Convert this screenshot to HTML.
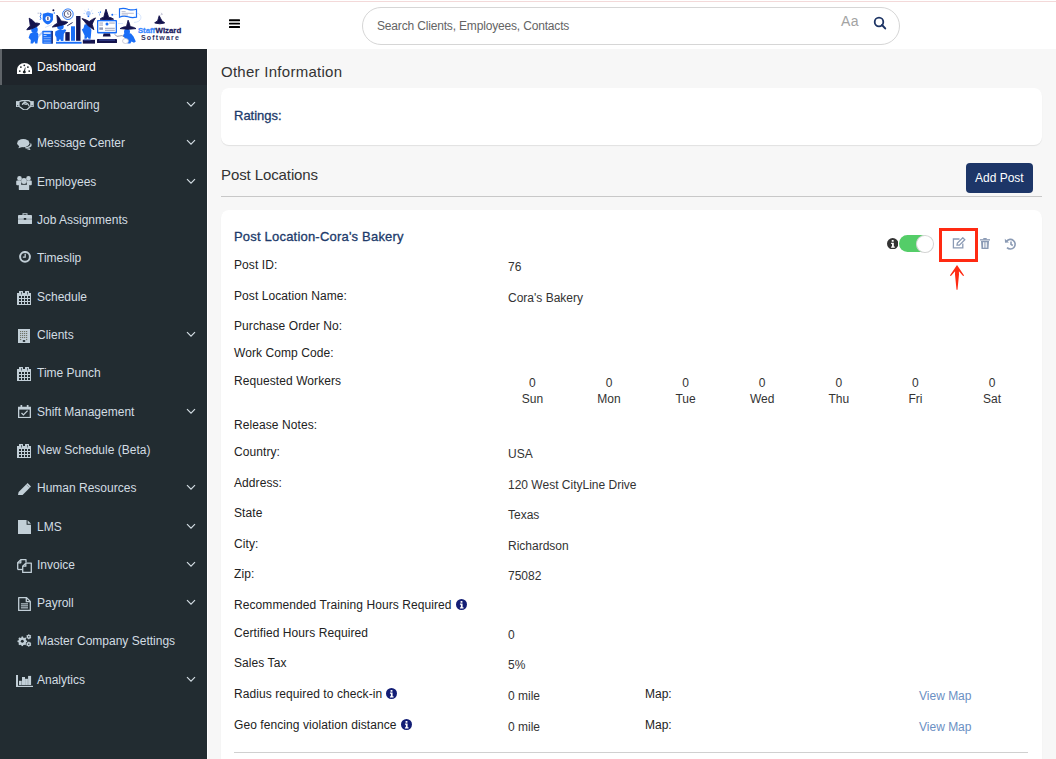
<!DOCTYPE html>
<html><head><meta charset="utf-8">
<style>
*{box-sizing:border-box;margin:0;padding:0}
html,body{width:1056px;height:759px;overflow:hidden;background:#f7f7f7;font-family:"Liberation Sans",sans-serif;font-size:12px;color:#212529}
.t{position:absolute;white-space:nowrap}
.ic{position:absolute;display:block}
.bx{position:absolute}
#topline{position:absolute;left:0;top:1px;width:1056px;height:1px;background:#f3d9d9}
#header{position:absolute;left:0;top:0;width:1056px;height:49px;background:#fff}
#sidebar{position:absolute;left:0;top:49px;width:207px;height:710px;background:#222c31}
.activebg{position:absolute;left:0;top:49px;width:207px;height:36px;background:#1f252b;border-left:2px solid #5f6469}
#gap{position:absolute;left:207px;top:49px;width:1px;height:710px;background:#fff}
.card{position:absolute;background:#fff;border-radius:8px;box-shadow:0 1px 1px rgba(0,0,0,0.09)}
</style></head><body>
<div id="header"></div><div id="topline"></div><div id="gap"></div>
<div id="sidebar"></div><div class="activebg"></div>
<svg class="ic" style="left:16.9px;top:62.6px" width="15" height="11.6" viewBox="0 0 15 11.6"><path d="M0 11.6V6.6A7.5 6.6 0 0 1 15 6.6V11.6Z" fill="#fff"/>
<g fill="#1d2428"><circle cx="2.8" cy="8.1" r="0.9"/><circle cx="3.9" cy="4.1" r="0.9"/><circle cx="7.3" cy="2.3" r="0.9"/><circle cx="10.9" cy="4.1" r="0.9"/><circle cx="12.2" cy="8.1" r="0.9"/><circle cx="7.3" cy="8.9" r="1.5"/><path d="M6.7 8.6L8 4.4L8.6 4.6L7.9 9Z"/></g></svg>
<div class="t" style="left:37px;top:61px;font-size:12px;line-height:12px;color:#ffffff;font-weight:normal;">Dashboard</div>
<svg class="ic" style="left:16px;top:99.7px" width="17.8" height="10.6" viewBox="0 0 17.8 10.6"><g fill="none" stroke="#c2cfd7" stroke-width="1.25" stroke-linejoin="round" stroke-linecap="round">
<path d="M3.6 1.3Q5.5 0.6 7 0.6H12.8L14.4 1.6"/><path d="M3.6 6.8L8 9.9H10.6L14.4 6.6"/><path d="M6.4 4.3L8.7 1.8L11.8 3.9L13.1 6"/><path d="M7.6 3.6L10.4 4.3"/></g>
<rect x="0" y="1.1" width="3.6" height="5.9" fill="#c2cfd7"/><rect x="14.2" y="1.1" width="3.6" height="5.9" fill="#c2cfd7"/><rect x="1.2" y="5.2" width="1" height="1" fill="#222b30"/><rect x="15.6" y="5.2" width="1" height="1" fill="#222b30"/></svg>
<div class="t" style="left:37px;top:99px;font-size:12px;line-height:12px;color:#d3dde3;font-weight:normal;">Onboarding</div>
<svg class="ic" style="left:185.5px;top:101.0px" width="10" height="7" viewBox="0 0 10 7"><path d="M1 1.2L5 5.2L9 1.2" fill="none" stroke="#d3dde3" stroke-width="1.2"/></svg>
<svg class="ic" style="left:16.9px;top:138.6px" width="15" height="11.4" viewBox="0 0 15 11.4"><path d="M8 9.2Q12.5 9.5 14.2 7.5Q15.3 5.6 13.6 3.8Q14 7.7 8 8.4Z" fill="#c2cfd7"/><path d="M13.6 11.2L12.6 9.2L8.5 9.4Q11.5 10.5 13.6 11.2Z" fill="#c2cfd7"/>
<ellipse cx="6.3" cy="4.2" rx="6.1" ry="4.1" fill="#c2cfd7"/><path d="M1.3 9.3L2.6 6.6L5.2 7.9Z" fill="#c2cfd7"/></svg>
<div class="t" style="left:37px;top:137px;font-size:12px;line-height:12px;color:#d3dde3;font-weight:normal;">Message Center</div>
<svg class="ic" style="left:185.5px;top:139.0px" width="10" height="7" viewBox="0 0 10 7"><path d="M1 1.2L5 5.2L9 1.2" fill="none" stroke="#d3dde3" stroke-width="1.2"/></svg>
<svg class="ic" style="left:16.1px;top:175.7px" width="16" height="14.3" viewBox="0 0 16 14.3"><g fill="#c2cfd7"><circle cx="3.5" cy="2.4" r="2.3"/><circle cx="12.5" cy="2.4" r="2.3"/><rect x="0.2" y="4.6" width="5" height="4.6" rx="1"/><rect x="10.8" y="4.6" width="5" height="4.6" rx="1"/>
<circle cx="8" cy="5" r="2.9"/><rect x="2.8" y="8.8" width="10.4" height="5.5" rx="1"/></g></svg>
<div class="t" style="left:37px;top:176px;font-size:12px;line-height:12px;color:#d3dde3;font-weight:normal;">Employees</div>
<svg class="ic" style="left:185.5px;top:178.0px" width="10" height="7" viewBox="0 0 10 7"><path d="M1 1.2L5 5.2L9 1.2" fill="none" stroke="#d3dde3" stroke-width="1.2"/></svg>
<svg class="ic" style="left:17.9px;top:212.7px" width="14" height="11.3" viewBox="0 0 14 11.3"><g fill="#c2cfd7"><path d="M4.5 0.2H9.5V2H8.5V1.2H5.5V2H4.5Z"/><rect x="0" y="2" width="14" height="9.3" rx="0.8"/></g><rect x="0" y="5.6" width="14" height="1" fill="#8b979e"/><rect x="5.8" y="5" width="2.4" height="1.8" fill="#222b30"/></svg>
<div class="t" style="left:37px;top:214px;font-size:12px;line-height:12px;color:#d3dde3;font-weight:normal;">Job Assignments</div>
<svg class="ic" style="left:18.5px;top:251.4px" width="12" height="11.7" viewBox="0 0 12 11.7"><circle cx="6" cy="5.85" r="4.9" fill="none" stroke="#c2cfd7" stroke-width="2"/><path d="M6.2 2.8V6.2H3.8" fill="none" stroke="#c2cfd7" stroke-width="1.3"/></svg>
<div class="t" style="left:37px;top:252px;font-size:12px;line-height:12px;color:#d3dde3;font-weight:normal;">Timeslip</div>
<svg class="ic" style="left:17px;top:291.0px" width="14" height="14" viewBox="0 0 14 14"><path d="M0 2H2V0.3Q2 0 2.3 0H5.7Q6 0 6 0.3V2H8V0.3Q8 0 8.3 0H11.7Q12 0 12 0.3V2H14V14H0Z" fill="#c2cfd7"/><rect x="4" y="1" width="1" height="2.5" fill="#5d6a72"/><rect x="10" y="1" width="1" height="2.5" fill="#5d6a72"/><rect x="2" y="5" width="2" height="2" fill="#222c31"/><rect x="5" y="5" width="2" height="2" fill="#222c31"/><rect x="8" y="5" width="2" height="2" fill="#222c31"/><rect x="11" y="5" width="2" height="2" fill="#222c31"/><rect x="2" y="8" width="2" height="2" fill="#222c31"/><rect x="5" y="8" width="2" height="2" fill="#222c31"/><rect x="8" y="8" width="2" height="2" fill="#222c31"/><rect x="11" y="8" width="2" height="2" fill="#222c31"/><rect x="2" y="11" width="2" height="2" fill="#222c31"/><rect x="5" y="11" width="2" height="2" fill="#222c31"/><rect x="8" y="11" width="2" height="2" fill="#222c31"/><rect x="11" y="11" width="2" height="2" fill="#222c31"/></svg>
<div class="t" style="left:37px;top:291px;font-size:12px;line-height:12px;color:#d3dde3;font-weight:normal;">Schedule</div>
<svg class="ic" style="left:18px;top:329.0px" width="12" height="14" viewBox="0 0 12 14"><rect x="0" y="0" width="12" height="14" fill="#c2cfd7"/><rect x="2" y="2" width="1.2" height="1.1" fill="#6f7466"/><rect x="4" y="2" width="1.2" height="1.1" fill="#6f7466"/><rect x="6" y="2" width="1.2" height="1.1" fill="#6f7466"/><rect x="8" y="2" width="1.2" height="1.1" fill="#6f7466"/><rect x="2" y="4" width="1.2" height="1.1" fill="#6f7466"/><rect x="4" y="4" width="1.2" height="1.1" fill="#6f7466"/><rect x="6" y="4" width="1.2" height="1.1" fill="#6f7466"/><rect x="8" y="4" width="1.2" height="1.1" fill="#6f7466"/><rect x="2" y="6" width="1.2" height="1.1" fill="#6f7466"/><rect x="4" y="6" width="1.2" height="1.1" fill="#6f7466"/><rect x="6" y="6" width="1.2" height="1.1" fill="#6f7466"/><rect x="8" y="6" width="1.2" height="1.1" fill="#6f7466"/><rect x="2" y="8" width="1.2" height="1.1" fill="#6f7466"/><rect x="4" y="8" width="1.2" height="1.1" fill="#6f7466"/><rect x="6" y="8" width="1.2" height="1.1" fill="#6f7466"/><rect x="8" y="8" width="1.2" height="1.1" fill="#6f7466"/><rect x="2" y="10" width="1.2" height="1.1" fill="#6f7466"/><rect x="8" y="10" width="1.2" height="1.1" fill="#6f7466"/><ellipse cx="6" cy="12.1" rx="1.4" ry="1" fill="#222c31"/></svg>
<div class="t" style="left:37px;top:329px;font-size:12px;line-height:12px;color:#d3dde3;font-weight:normal;">Clients</div>
<svg class="ic" style="left:185.5px;top:331.0px" width="10" height="7" viewBox="0 0 10 7"><path d="M1 1.2L5 5.2L9 1.2" fill="none" stroke="#d3dde3" stroke-width="1.2"/></svg>
<svg class="ic" style="left:17px;top:367.0px" width="14" height="14" viewBox="0 0 14 14"><path d="M0 2H2V0.3Q2 0 2.3 0H5.7Q6 0 6 0.3V2H8V0.3Q8 0 8.3 0H11.7Q12 0 12 0.3V2H14V14H0Z" fill="#c2cfd7"/><rect x="4" y="1" width="1" height="2.5" fill="#5d6a72"/><rect x="10" y="1" width="1" height="2.5" fill="#5d6a72"/><rect x="2" y="5" width="2" height="2" fill="#222c31"/><rect x="5" y="5" width="2" height="2" fill="#222c31"/><rect x="8" y="5" width="2" height="2" fill="#222c31"/><rect x="11" y="5" width="2" height="2" fill="#222c31"/><rect x="2" y="8" width="2" height="2" fill="#222c31"/><rect x="5" y="8" width="2" height="2" fill="#222c31"/><rect x="8" y="8" width="2" height="2" fill="#222c31"/><rect x="11" y="8" width="2" height="2" fill="#222c31"/><rect x="2" y="11" width="2" height="2" fill="#222c31"/><rect x="5" y="11" width="2" height="2" fill="#222c31"/><rect x="8" y="11" width="2" height="2" fill="#222c31"/><rect x="11" y="11" width="2" height="2" fill="#222c31"/></svg>
<div class="t" style="left:37px;top:367px;font-size:12px;line-height:12px;color:#d3dde3;font-weight:normal;">Time Punch</div>
<svg class="ic" style="left:17.9px;top:405.0px" width="13" height="13.2" viewBox="0 0 13 13.2"><g fill="none" stroke="#c2cfd7" stroke-width="1.3"><rect x="0.65" y="2.4" width="11.7" height="10.15"/><path d="M3.5 8L5.4 9.9L9.6 5.6"/></g><rect x="0.65" y="2.4" width="11.7" height="2.2" fill="#c2cfd7"/><rect x="2.5" y="0" width="1.7" height="3" fill="#c2cfd7"/><rect x="8.8" y="0" width="1.7" height="3" fill="#c2cfd7"/></svg>
<div class="t" style="left:37px;top:406px;font-size:12px;line-height:12px;color:#d3dde3;font-weight:normal;">Shift Management</div>
<svg class="ic" style="left:185.5px;top:408.0px" width="10" height="7" viewBox="0 0 10 7"><path d="M1 1.2L5 5.2L9 1.2" fill="none" stroke="#d3dde3" stroke-width="1.2"/></svg>
<svg class="ic" style="left:17px;top:444.0px" width="14" height="14" viewBox="0 0 14 14"><path d="M0 2H2V0.3Q2 0 2.3 0H5.7Q6 0 6 0.3V2H8V0.3Q8 0 8.3 0H11.7Q12 0 12 0.3V2H14V14H0Z" fill="#c2cfd7"/><rect x="4" y="1" width="1" height="2.5" fill="#5d6a72"/><rect x="10" y="1" width="1" height="2.5" fill="#5d6a72"/><rect x="2" y="5" width="2" height="2" fill="#222c31"/><rect x="5" y="5" width="2" height="2" fill="#222c31"/><rect x="8" y="5" width="2" height="2" fill="#222c31"/><rect x="11" y="5" width="2" height="2" fill="#222c31"/><rect x="2" y="8" width="2" height="2" fill="#222c31"/><rect x="5" y="8" width="2" height="2" fill="#222c31"/><rect x="8" y="8" width="2" height="2" fill="#222c31"/><rect x="11" y="8" width="2" height="2" fill="#222c31"/><rect x="2" y="11" width="2" height="2" fill="#222c31"/><rect x="5" y="11" width="2" height="2" fill="#222c31"/><rect x="8" y="11" width="2" height="2" fill="#222c31"/><rect x="11" y="11" width="2" height="2" fill="#222c31"/></svg>
<div class="t" style="left:37px;top:444px;font-size:12px;line-height:12px;color:#d3dde3;font-weight:normal;">New Schedule (Beta)</div>
<svg class="ic" style="left:17.9px;top:482.9px" width="13.1" height="12.1" viewBox="0 0 13.1 12.1"><path d="M0 12.1L0.6 9L9.6 0L13.1 3.5L4.1 12.5Z" fill="#c2cfd7"/><path d="M8.3 1.4L11.7 4.8" stroke="#7f8a90" stroke-width="0.8"/></svg>
<div class="t" style="left:37px;top:482px;font-size:12px;line-height:12px;color:#d3dde3;font-weight:normal;">Human Resources</div>
<svg class="ic" style="left:185.5px;top:484.0px" width="10" height="7" viewBox="0 0 10 7"><path d="M1 1.2L5 5.2L9 1.2" fill="none" stroke="#d3dde3" stroke-width="1.2"/></svg>
<svg class="ic" style="left:17.9px;top:519.7px" width="13.1" height="14.4" viewBox="0 0 13.1 14.4"><path d="M0 0H8.6V4.7H13.1V14.4H0Z" fill="#c2cfd7"/><path d="M9.6 0.2L13.1 3.8H9.6Z" fill="#c2cfd7"/></svg>
<div class="t" style="left:37px;top:521px;font-size:12px;line-height:12px;color:#d3dde3;font-weight:normal;">LMS</div>
<svg class="ic" style="left:185.5px;top:523.0px" width="10" height="7" viewBox="0 0 10 7"><path d="M1 1.2L5 5.2L9 1.2" fill="none" stroke="#d3dde3" stroke-width="1.2"/></svg>
<svg class="ic" style="left:17px;top:558.8px" width="15" height="14.2" viewBox="0 0 15 14.2"><g fill="none" stroke="#c2cfd7" stroke-width="1.3" stroke-linejoin="round"><path d="M0.7 10.5V3.8L3.8 0.7H9V3.5"/><path d="M5.7 13.5V7.2L8.8 4.1H14.3V13.5Z"/><path d="M0.7 3.8H3.8V0.7"/><path d="M5.7 7.2H8.8V4.1"/><path d="M0.7 10.5H5.7"/></g></svg>
<div class="t" style="left:37px;top:559px;font-size:12px;line-height:12px;color:#d3dde3;font-weight:normal;">Invoice</div>
<svg class="ic" style="left:185.5px;top:561.0px" width="10" height="7" viewBox="0 0 10 7"><path d="M1 1.2L5 5.2L9 1.2" fill="none" stroke="#d3dde3" stroke-width="1.2"/></svg>
<svg class="ic" style="left:18px;top:596.8px" width="13" height="14.2" viewBox="0 0 13 14.2"><g fill="none" stroke="#c2cfd7" stroke-width="1.3" stroke-linejoin="round"><path d="M0.7 0.7H8.6L12.3 4.4V13.5H0.7Z"/><path d="M8.3 0.9V4.7H12"/></g><g fill="#c2cfd7"><rect x="2.9" y="6.3" width="7.1" height="1.1"/><rect x="2.9" y="8.3" width="7.1" height="1.1"/><rect x="2.9" y="10.3" width="7.1" height="1.1"/></g></svg>
<div class="t" style="left:37px;top:597px;font-size:12px;line-height:12px;color:#d3dde3;font-weight:normal;">Payroll</div>
<svg class="ic" style="left:185.5px;top:599.0px" width="10" height="7" viewBox="0 0 10 7"><path d="M1 1.2L5 5.2L9 1.2" fill="none" stroke="#d3dde3" stroke-width="1.2"/></svg>
<svg class="ic" style="left:17.1px;top:633.7px" width="15.2" height="13.3" viewBox="0 0 15.2 13.3"><circle cx="5.3" cy="7.3" r="3.9" fill="#c2cfd7"/><rect x="4.5" y="2.5" width="1.6" height="1.5" fill="#c2cfd7" transform="rotate(0.0 5.3 7.3)"/><rect x="4.5" y="2.5" width="1.6" height="1.5" fill="#c2cfd7" transform="rotate(45.0 5.3 7.3)"/><rect x="4.5" y="2.5" width="1.6" height="1.5" fill="#c2cfd7" transform="rotate(90.0 5.3 7.3)"/><rect x="4.5" y="2.5" width="1.6" height="1.5" fill="#c2cfd7" transform="rotate(135.0 5.3 7.3)"/><rect x="4.5" y="2.5" width="1.6" height="1.5" fill="#c2cfd7" transform="rotate(180.0 5.3 7.3)"/><rect x="4.5" y="2.5" width="1.6" height="1.5" fill="#c2cfd7" transform="rotate(225.0 5.3 7.3)"/><rect x="4.5" y="2.5" width="1.6" height="1.5" fill="#c2cfd7" transform="rotate(270.0 5.3 7.3)"/><rect x="4.5" y="2.5" width="1.6" height="1.5" fill="#c2cfd7" transform="rotate(315.0 5.3 7.3)"/><circle cx="5.3" cy="7.3" r="1.5" fill="#222b30"/><circle cx="11.8" cy="2.8" r="2.1" fill="#c2cfd7"/><rect x="11.25" y="0.2999999999999997" width="1.1" height="1.0" fill="#c2cfd7" transform="rotate(0.0 11.8 2.8)"/><rect x="11.25" y="0.2999999999999997" width="1.1" height="1.0" fill="#c2cfd7" transform="rotate(60.0 11.8 2.8)"/><rect x="11.25" y="0.2999999999999997" width="1.1" height="1.0" fill="#c2cfd7" transform="rotate(120.0 11.8 2.8)"/><rect x="11.25" y="0.2999999999999997" width="1.1" height="1.0" fill="#c2cfd7" transform="rotate(180.0 11.8 2.8)"/><rect x="11.25" y="0.2999999999999997" width="1.1" height="1.0" fill="#c2cfd7" transform="rotate(240.0 11.8 2.8)"/><rect x="11.25" y="0.2999999999999997" width="1.1" height="1.0" fill="#c2cfd7" transform="rotate(300.0 11.8 2.8)"/><circle cx="11.8" cy="2.8" r="0.7" fill="#222b30"/><circle cx="11.8" cy="10.2" r="2.1" fill="#c2cfd7"/><rect x="11.25" y="7.699999999999999" width="1.1" height="1.0" fill="#c2cfd7" transform="rotate(0.0 11.8 10.2)"/><rect x="11.25" y="7.699999999999999" width="1.1" height="1.0" fill="#c2cfd7" transform="rotate(60.0 11.8 10.2)"/><rect x="11.25" y="7.699999999999999" width="1.1" height="1.0" fill="#c2cfd7" transform="rotate(120.0 11.8 10.2)"/><rect x="11.25" y="7.699999999999999" width="1.1" height="1.0" fill="#c2cfd7" transform="rotate(180.0 11.8 10.2)"/><rect x="11.25" y="7.699999999999999" width="1.1" height="1.0" fill="#c2cfd7" transform="rotate(240.0 11.8 10.2)"/><rect x="11.25" y="7.699999999999999" width="1.1" height="1.0" fill="#c2cfd7" transform="rotate(300.0 11.8 10.2)"/><circle cx="11.8" cy="10.2" r="0.7" fill="#222b30"/></svg>
<div class="t" style="left:37px;top:635px;font-size:12px;line-height:12px;color:#d3dde3;font-weight:normal;">Master Company Settings</div>
<svg class="ic" style="left:16px;top:675.0px" width="17" height="12.2" viewBox="0 0 17 12.2"><g fill="#c2cfd7"><rect x="0" y="0" width="2" height="12.2"/><rect x="0" y="10.8" width="17" height="1.4"/><rect x="3" y="5.8" width="2.7" height="4.2"/><rect x="6" y="2" width="3" height="8"/><rect x="9.1" y="3.8" width="2.8" height="6.2"/><rect x="12.1" y="0.9" width="3" height="9.1"/></g></svg>
<div class="t" style="left:37px;top:674px;font-size:12px;line-height:12px;color:#d3dde3;font-weight:normal;">Analytics</div>
<svg class="ic" style="left:185.5px;top:676.0px" width="10" height="7" viewBox="0 0 10 7"><path d="M1 1.2L5 5.2L9 1.2" fill="none" stroke="#d3dde3" stroke-width="1.2"/></svg>
<svg class="ic" style="left:0;top:0" width="200" height="49" viewBox="0 0 200 49">
<circle cx="34.5" cy="29.8" r="3.3" fill="#1a6ef7"/>
<path d="M26.8 29.8Q28.2 27.2 30.3 26Q29.8 22 29.2 18.2Q32.5 19.8 35.3 23Q37.8 22.9 39.9 23.8Q38.2 26.2 34 27.8Q30 29.8 26.8 29.8Z" fill="#14134d" stroke="#14134d" stroke-width="0.9" stroke-linejoin="round"/>
<path d="M30 33.8Q33.5 31.3 37.6 32.5L38.8 35.6L37.8 40.2L37.4 43.6H35.2L34.4 41.2L33 43.6H30.6L30.8 40L28.6 37.8Z" fill="#1a6ef7"/>
<path d="M37.8 35.5L41.8 31.8L43 33L39 37Z" fill="#b9d0f7"/>
<path d="M40.6 12.8L41 14.6L40.2 16.3L40.9 18.5L40.1 19.8" fill="none" stroke="#1a6ef7" stroke-width="1"/>
<path d="M37.5 13.2H39.5" stroke="#8d9ac0" stroke-width="0.6"/>
<circle cx="53.4" cy="10.2" r="1" fill="#14134d"/><circle cx="54.3" cy="13" r="0.7" fill="#1a6ef7"/>
<path d="M42.8 13.8L47.8 12.4L53.1 13.8L53 19.5Q52 23 47.8 24.6Q43.7 23 42.7 19.5Z" fill="#1a6ef7"/>
<circle cx="47.9" cy="18.4" r="2.5" fill="#fff"/><rect x="47.4" y="16.7" width="1" height="3.4" fill="#14134d"/>
<path d="M45 27.5L52 24.5" stroke="#d5e2fb" stroke-width="1"/>
<rect x="42.3" y="30.7" width="10.4" height="13" rx="0.6" fill="#1a6ef7"/><rect x="51.6" y="31" width="1.1" height="12.6" fill="#14134d"/>
<rect x="43.6" y="32.3" width="7" height="1.6" fill="#e8efff"/><rect x="43.6" y="35" width="3" height="0.8" fill="#cfe0ff"/>
<rect x="43.6" y="37.4" width="7" height="0.7" fill="#9dbdf7"/><rect x="43.6" y="39.4" width="7" height="0.9" fill="#9dbdf7"/><rect x="43.6" y="41.8" width="7" height="0.7" fill="#9dbdf7"/>
<circle cx="60.4" cy="26.6" r="3.3" fill="#1a6ef7"/>
<path d="M52.3 27Q54.5 24.5 57.5 23.2Q57.3 19 56.9 15.1Q59.5 17.5 61 21Q65 21.2 67.8 22.3Q66 24.5 60.5 25.5Q56 26.8 52.3 27Z" fill="#14134d" stroke="#14134d" stroke-width="0.9" stroke-linejoin="round"/>
<path d="M55.3 31.5Q58.5 29 62.5 30L65 29.2L66.3 30.2L63.8 34L63.4 40.9H61L60 38.8L58.8 40.9H56.6L56.4 37.5L55 35Z" fill="#1a6ef7"/>
<path d="M67.2 25.8L72.6 22.5" stroke="#14134d" stroke-width="0.9"/>
<circle cx="67.9" cy="14.2" r="5.3" fill="none" stroke="#1a6ef7" stroke-width="0.9"/>
<circle cx="67.6" cy="14" r="3.4" fill="none" stroke="#4d4d70" stroke-width="1"/>
<path d="M67.7 12.1V14.2H69.2" fill="none" stroke="#4d4d70" stroke-width="0.7"/>
<rect x="65.3" y="32.1" width="4.4" height="8.7" fill="#14134d"/>
<rect x="71" y="26.3" width="4" height="14.5" fill="#1a6ef7"/>
<rect x="76.1" y="16" width="4.4" height="24.8" fill="#14134d"/>
<rect x="56" y="41.8" width="25.6" height="1.9" fill="#1a6ef7"/>
<path d="M84.5 24.5Q87 23.5 89.5 25.8L91.4 30L91 35L90.6 38.8H88.6L87.6 37L86.5 38.8H84.4L84.6 35.5L81.8 29.5L83.5 28.2Z" fill="#1a6ef7"/>
<path d="M82.1 18.6Q86 19.5 89.2 21.6Q92.5 19 95.5 17.9Q93.2 21 92.2 24.2Q93 27 93.9 29.7Q90 27 87.6 25.3Q84.5 21.5 82.1 18.6Z" fill="#14134d" stroke="#14134d" stroke-width="0.9" stroke-linejoin="round"/>
<rect x="82.8" y="39.8" width="12.2" height="3.8" fill="#14134d"/><rect x="83.5" y="39.4" width="7" height="1" fill="#3f5fd0"/>
<circle cx="88.4" cy="13.4" r="2.3" fill="#9cc0fb"/><rect x="87.6" y="15.6" width="1.6" height="1.5" fill="#1a6ef7"/>
<path d="M88.4 8.6V9.8M84.6 10.4L85.5 11.2M92.2 10.4L91.3 11.2M83.6 13.4H84.8M93.2 13.4H92" stroke="#9cc0fb" stroke-width="0.8"/>
<path d="M100 19.2Q101.5 17.6 103.8 17.2Q105 12 106 9.2Q107.3 12.5 108.6 17.2Q111.8 17.6 113.6 19.2Q107 20.2 100 19.2Z" fill="#14134d" stroke="#14134d" stroke-width="0.9" stroke-linejoin="round"/>
<path d="M98.5 12.3L99.3 13.3M100.4 11.3V13M99.2 15.2L100.1 14.3" stroke="#1a6ef7" stroke-width="0.8"/>
<circle cx="112.3" cy="14.7" r="1" fill="#1a6ef7"/><path d="M113.5 14.5H117" stroke="#c5d8fb" stroke-width="0.6"/>
<rect x="97" y="20" width="20" height="13.4" rx="0.8" fill="#1a6ef7"/>
<rect x="98.3" y="21.3" width="17.4" height="10.6" fill="#fff"/>
<rect x="99.3" y="22.6" width="3.7" height="0.9" fill="#8f97b5"/><rect x="99.3" y="24.6" width="3.7" height="0.9" fill="#8f97b5"/><rect x="99.3" y="27.4" width="3.7" height="2.4" fill="#8f97b5"/>
<circle cx="107" cy="24" r="1.5" fill="#1a6ef7"/><rect x="105" y="27.8" width="9.8" height="0.9" fill="#8f97b5"/><rect x="105" y="29.8" width="9.8" height="0.9" fill="#8f97b5"/><rect x="109.2" y="22.6" width="5.6" height="0.9" fill="#8f97b5"/>
<path d="M103.6 33.4H110L110.7 36.5H102.8Z" fill="#14134d"/>
<rect x="97" y="38.9" width="20" height="4.2" rx="0.6" fill="#14134d"/><rect x="99" y="39.4" width="16" height="1.2" fill="#3a4a9a"/>
<path d="M119.5 8.8Q124 7.6 128 9.3Q132.5 10.6 136.5 9.3V17.2Q132 18.3 128 16.8Q123.5 15.3 119.5 17.2Z" fill="none" stroke="#1a6ef7" stroke-width="1.2"/>
<path d="M121.6 11.6H125.6M121.6 13.3H133.8M121.6 15H128" stroke="#a8acc8" stroke-width="0.8"/>
<path d="M136.8 13Q141 14 141 18Q140 22 134 22.5M118 23.5H123" fill="none" stroke="#c8dbfb" stroke-width="0.7"/>
<circle cx="127" cy="31.8" r="3" fill="#1a6ef7"/>
<path d="M120 28.6Q123 26.8 126.5 26.6Q127.5 22.5 128.1 20.2Q129.5 23 130.2 26.6Q133.5 26.9 136 28.6Q128 30 120 28.6Z" fill="#14134d" stroke="#14134d" stroke-width="0.9" stroke-linejoin="round"/>
<path d="M124 33.5Q127.5 32.5 131 33.5L133.5 36.5L135.8 41.5L134 42.8L131.5 41.5L130.3 43.6H127.5L126.5 40L123 36Z" fill="#1a6ef7"/>
<path d="M114.5 34.3Q117 37.5 119.5 36Q122 35 124 36.5" fill="none" stroke="#4a4a6a" stroke-width="0.6"/>
<ellipse cx="125.5" cy="41" rx="3" ry="2.5" fill="#fff" stroke="#b8b8cc" stroke-width="0.7"/>
<path d="M154.7 23Q155.5 21.6 157.5 21.3Q158.5 18 159.2 15.7Q160.3 18 162.2 21.3Q164 21.7 164.7 23Q160 24.6 154.7 23Z" fill="#14134d" stroke="#14134d" stroke-width="0.9" stroke-linejoin="round"/>
<path d="M160.5 15L163 14M161.2 12.8L161.8 14.2" stroke="#9a9ab8" stroke-width="0.5"/>
<text x="137.9" y="32.7" font-family="Liberation Sans" font-weight="bold" font-size="7.8" fill="#3a88ff" stroke="#3a88ff" stroke-width="0.3" textLength="17.2" lengthAdjust="spacingAndGlyphs">Staff</text>
<text x="155.6" y="32.7" font-family="Liberation Sans" font-weight="bold" font-size="7.8" fill="#1b1b5e" stroke="#1b1b5e" stroke-width="0.3" textLength="25.6" lengthAdjust="spacingAndGlyphs">Wizard</text>
<text x="141" y="39.6" font-family="Liberation Sans" font-weight="bold" font-size="7" fill="#2c2f62" textLength="37.9" lengthAdjust="spacing">Software</text>
</svg>
<svg class="ic" style="left:229px;top:18px" width="11" height="12" viewBox="0 0 11 12"><g fill="#000"><rect x="0" y="1.3" width="11" height="1.9" rx="0.5"/><rect x="0" y="4.7" width="11" height="1.9" rx="0.5"/><rect x="0" y="8.1" width="11" height="1.9" rx="0.5"/></g></svg>
<div class="bx" style="left:362px;top:7px;width:538px;height:38px;border:1px solid #d6d6d6;border-radius:19px;background:#fff"></div>
<div class="t" style="left:377px;top:20px;font-size:12px;line-height:12px;color:#646464;font-weight:normal;letter-spacing:-0.17px">Search Clients, Employees, Contacts</div>
<div class="t" style="left:841px;top:14px;font-size:14px;line-height:14px;color:#a3a3a3;font-weight:normal;letter-spacing:0.3px">Aa</div>
<svg class="ic" style="left:872px;top:15px" width="16" height="16" viewBox="0 0 16 16"><circle cx="7" cy="7" r="4.3" fill="none" stroke="#1d3464" stroke-width="1.8"/><path d="M10 10L13.2 13.4" stroke="#1d3464" stroke-width="2" stroke-linecap="round"/></svg>
<div class="t" style="left:221px;top:64px;font-size:15px;line-height:15px;color:#333;font-weight:normal;letter-spacing:0.27px">Other Information</div>
<div class="card" style="left:221px;top:88px;width:821px;height:57px"></div>
<div class="t" style="left:234px;top:109px;font-size:13px;line-height:13px;color:#203a6a;font-weight:normal;-webkit-text-stroke:0.3px #203a6a">Ratings:</div>
<div class="t" style="left:221px;top:167px;font-size:15px;line-height:15px;color:#333;font-weight:normal;letter-spacing:-0.1px">Post Locations</div>
<div class="bx" style="left:966px;top:163px;width:67px;height:30px;background:#1d3668;border-radius:4px"></div>
<div class="t" style="left:975px;top:172px;font-size:12px;line-height:12px;color:#fff;font-weight:normal;">Add Post</div>
<div class="bx" style="left:221px;top:196px;width:821px;height:1px;background:#c8c8c8"></div>
<div class="card" style="left:221px;top:210px;width:821px;height:600px"></div>
<div class="t" style="left:234px;top:230px;font-size:13px;line-height:13px;color:#203a6a;font-weight:normal;letter-spacing:0.2px;-webkit-text-stroke:0.3px #203a6a">Post Location-Cora's Bakery</div>
<div class="t" style="left:234px;top:259px;font-size:12px;line-height:12px;color:#222;font-weight:normal;letter-spacing:0.08px">Post ID:</div>
<div class="t" style="left:508px;top:261px;font-size:12px;line-height:12px;color:#333;font-weight:normal;">76</div>
<div class="t" style="left:234px;top:290px;font-size:12px;line-height:12px;color:#222;font-weight:normal;letter-spacing:0.08px">Post Location Name:</div>
<div class="t" style="left:508px;top:292px;font-size:12px;line-height:12px;color:#333;font-weight:normal;">Cora's Bakery</div>
<div class="t" style="left:234px;top:320px;font-size:12px;line-height:12px;color:#222;font-weight:normal;letter-spacing:0.08px">Purchase Order No:</div>
<div class="t" style="left:234px;top:347px;font-size:12px;line-height:12px;color:#222;font-weight:normal;letter-spacing:0.08px">Work Comp Code:</div>
<div class="t" style="left:234px;top:375px;font-size:12px;line-height:12px;color:#222;font-weight:normal;letter-spacing:0.08px">Requested Workers</div>
<div class="t" style="left:234px;top:419px;font-size:12px;line-height:12px;color:#222;font-weight:normal;letter-spacing:0.08px">Release Notes:</div>
<div class="t" style="left:234px;top:446px;font-size:12px;line-height:12px;color:#222;font-weight:normal;letter-spacing:0.08px">Country:</div>
<div class="t" style="left:508px;top:448px;font-size:12px;line-height:12px;color:#333;font-weight:normal;">USA</div>
<div class="t" style="left:234px;top:477px;font-size:12px;line-height:12px;color:#222;font-weight:normal;letter-spacing:0.08px">Address:</div>
<div class="t" style="left:508px;top:479px;font-size:12px;line-height:12px;color:#333;font-weight:normal;">120 West CityLine Drive</div>
<div class="t" style="left:234px;top:507px;font-size:12px;line-height:12px;color:#222;font-weight:normal;letter-spacing:0.08px">State</div>
<div class="t" style="left:508px;top:509px;font-size:12px;line-height:12px;color:#333;font-weight:normal;">Texas</div>
<div class="t" style="left:234px;top:538px;font-size:12px;line-height:12px;color:#222;font-weight:normal;letter-spacing:0.08px">City:</div>
<div class="t" style="left:508px;top:540px;font-size:12px;line-height:12px;color:#333;font-weight:normal;">Richardson</div>
<div class="t" style="left:234px;top:568px;font-size:12px;line-height:12px;color:#222;font-weight:normal;letter-spacing:0.08px">Zip:</div>
<div class="t" style="left:508px;top:570px;font-size:12px;line-height:12px;color:#333;font-weight:normal;">75082</div>
<div class="t" style="left:234px;top:599px;font-size:12px;line-height:12px;color:#222;font-weight:normal;letter-spacing:0.08px">Recommended Training Hours Required</div>
<div class="t" style="left:234px;top:627px;font-size:12px;line-height:12px;color:#222;font-weight:normal;letter-spacing:0.08px">Certified Hours Required</div>
<div class="t" style="left:508px;top:629px;font-size:12px;line-height:12px;color:#333;font-weight:normal;">0</div>
<div class="t" style="left:234px;top:657px;font-size:12px;line-height:12px;color:#222;font-weight:normal;letter-spacing:0.08px">Sales Tax</div>
<div class="t" style="left:508px;top:659px;font-size:12px;line-height:12px;color:#333;font-weight:normal;">5%</div>
<div class="t" style="left:234px;top:688px;font-size:12px;line-height:12px;color:#222;font-weight:normal;letter-spacing:0.08px">Radius required to check-in</div>
<div class="t" style="left:508px;top:690px;font-size:12px;line-height:12px;color:#333;font-weight:normal;">0 mile</div>
<div class="t" style="left:234px;top:719px;font-size:12px;line-height:12px;color:#222;font-weight:normal;letter-spacing:0.08px">Geo fencing violation distance</div>
<div class="t" style="left:508px;top:721px;font-size:12px;line-height:12px;color:#333;font-weight:normal;">0 mile</div>
<div class="t" style="left:502.4px;width:60px;text-align:center;top:377px;font-size:12px;line-height:12px;color:#333">0</div>
<div class="t" style="left:502.4px;width:60px;text-align:center;top:393px;font-size:12px;line-height:12px;color:#333">Sun</div>
<div class="t" style="left:579.0px;width:60px;text-align:center;top:377px;font-size:12px;line-height:12px;color:#333">0</div>
<div class="t" style="left:579.0px;width:60px;text-align:center;top:393px;font-size:12px;line-height:12px;color:#333">Mon</div>
<div class="t" style="left:655.6px;width:60px;text-align:center;top:377px;font-size:12px;line-height:12px;color:#333">0</div>
<div class="t" style="left:655.6px;width:60px;text-align:center;top:393px;font-size:12px;line-height:12px;color:#333">Tue</div>
<div class="t" style="left:732.2px;width:60px;text-align:center;top:377px;font-size:12px;line-height:12px;color:#333">0</div>
<div class="t" style="left:732.2px;width:60px;text-align:center;top:393px;font-size:12px;line-height:12px;color:#333">Wed</div>
<div class="t" style="left:808.8px;width:60px;text-align:center;top:377px;font-size:12px;line-height:12px;color:#333">0</div>
<div class="t" style="left:808.8px;width:60px;text-align:center;top:393px;font-size:12px;line-height:12px;color:#333">Thu</div>
<div class="t" style="left:885.4px;width:60px;text-align:center;top:377px;font-size:12px;line-height:12px;color:#333">0</div>
<div class="t" style="left:885.4px;width:60px;text-align:center;top:393px;font-size:12px;line-height:12px;color:#333">Fri</div>
<div class="t" style="left:962.0px;width:60px;text-align:center;top:377px;font-size:12px;line-height:12px;color:#333">0</div>
<div class="t" style="left:962.0px;width:60px;text-align:center;top:393px;font-size:12px;line-height:12px;color:#333">Sat</div>
<div class="t" style="left:645px;top:688px;font-size:12px;line-height:12px;color:#222;font-weight:normal;">Map:</div>
<div class="t" style="left:919px;top:690px;font-size:12px;line-height:12px;color:#6b8fc3;font-weight:normal;">View Map</div>
<div class="t" style="left:645px;top:719px;font-size:12px;line-height:12px;color:#222;font-weight:normal;">Map:</div>
<div class="t" style="left:919px;top:721px;font-size:12px;line-height:12px;color:#6b8fc3;font-weight:normal;">View Map</div>
<div class="bx" style="left:234px;top:752px;width:794px;height:1px;background:#d0d0d0"></div>
<svg class="ic" style="left:456px;top:599px" width="11" height="11" viewBox="0 0 12 12"><circle cx="6" cy="6" r="6" fill="#121d75"/><path d="M5 2.2h2v1.8h-2z M4.3 5h2.9v4h1v1.4h-3.9v-1.4h1v-2.6h-1z" fill="#fff"/></svg>
<svg class="ic" style="left:385.5px;top:688px" width="11" height="11" viewBox="0 0 12 12"><circle cx="6" cy="6" r="6" fill="#121d75"/><path d="M5 2.2h2v1.8h-2z M4.3 5h2.9v4h1v1.4h-3.9v-1.4h1v-2.6h-1z" fill="#fff"/></svg>
<svg class="ic" style="left:400.7px;top:719px" width="11" height="11" viewBox="0 0 12 12"><circle cx="6" cy="6" r="6" fill="#121d75"/><path d="M5 2.2h2v1.8h-2z M4.3 5h2.9v4h1v1.4h-3.9v-1.4h1v-2.6h-1z" fill="#fff"/></svg>
<svg class="ic" style="left:886.8px;top:237.6px" width="11.4" height="11.4" viewBox="0 0 12 12"><circle cx="6" cy="6" r="6" fill="#333"/><path d="M5 2.2h2v1.8h-2z M4.3 5h2.9v4h1v1.4h-3.9v-1.4h1v-2.6h-1z" fill="#fff"/></svg>
<div class="bx" style="left:899px;top:235.4px;width:30px;height:17px;border-radius:8.5px;background:#54cd68"></div>
<div class="bx" style="left:916px;top:235.2px;width:17.8px;height:17.4px;border-radius:50%;background:#fff;border:1px solid #d4d4d4"></div>
<div class="bx" style="left:938.5px;top:228px;width:39.8px;height:34px;border:3px solid #ff2a12"></div>
<svg class="ic" style="left:952px;top:237px" width="15" height="12" viewBox="0 0 15 12"><g fill="none" stroke="#8a9ab4" stroke-width="1.3"><path d="M7.5 2H1.4V10.8H10.8V6.5"/><path d="M5 8.2L5.4 6L10.8 0.8L12.8 2.8L7.4 8.2Z"/></g></svg>
<svg class="ic" style="left:980px;top:238px" width="10" height="11" viewBox="0 0 10 11"><g fill="#8a9ab4"><rect x="0" y="1.2" width="10" height="1.3"/><rect x="3.3" y="0" width="3.4" height="1.5"/><path d="M1 3H9L8.5 11H1.5Z"/></g><g fill="#fff"><rect x="3" y="4.2" width="0.9" height="5.5"/><rect x="4.6" y="4.2" width="0.9" height="5.5"/><rect x="6.2" y="4.2" width="0.9" height="5.5"/></g></svg>
<svg class="ic" style="left:1003.5px;top:237.5px" width="13" height="12" viewBox="0 0 13 12"><g fill="none" stroke="#8a9ab4" stroke-width="1.6"><path d="M2.6 3.2A4.8 4.8 0 1 1 3 9.6"/><path d="M7 3.5V6.3L8.8 7.5"/></g><path d="M0.8 0.8L1 4.8L5 4.5Z" fill="#8a9ab4"/></svg>
<svg class="ic" style="left:948px;top:263px" width="18" height="28" viewBox="0 0 18 28"><path d="M9 2L1.9 12.4L2.9 12.9L7.1 8.2L7 11.5L8.5 26.8H9.5L11 11.5L10.9 8.2L15.1 12.9L16.1 12.4Z" fill="#ff2a12"/></svg>
</body></html>
